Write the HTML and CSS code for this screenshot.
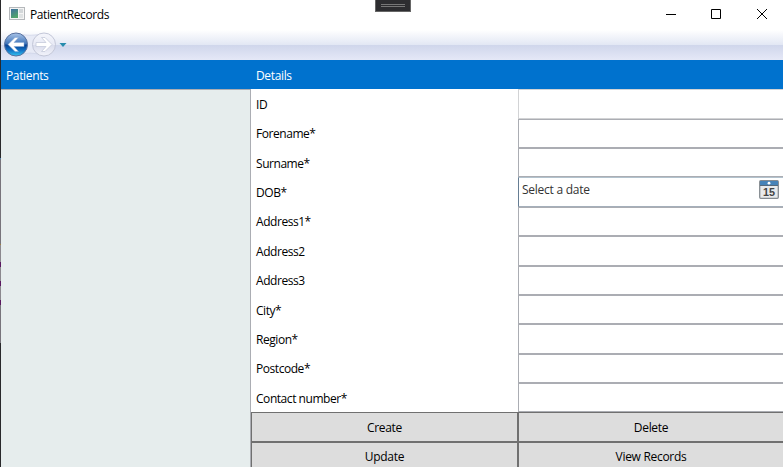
FILE: index.html
```
<!DOCTYPE html>
<html lang="en">
<head>
<meta charset="utf-8">
<title>PatientRecords</title>
<link rel="stylesheet" href="styles.css">
</head>
<body>
<div class="screen">
  <div class="backdrop"></div>
  <div class="window">
    <header class="titlebar">
      <svg class="app-icon" width="16" height="14" viewBox="0 0 16 14">
        <defs><linearGradient id="app" x1="0" y1="0" x2="0.4" y2="1"><stop offset="0" stop-color="#3f6fa0"/><stop offset="1" stop-color="#4fa36b"/></linearGradient></defs>
        <rect x=".5" y=".5" width="15" height="12" fill="#f4f4f4" stroke="#b5b8bb"/>
        <rect x="2" y="2" width="7" height="9" fill="url(#app)"/>
        <rect x="10" y="2" width="4" height="4" fill="#d3d7d9"/><rect x="10" y="7" width="4" height="4" fill="#dfe2e3"/>
      </svg>
      <span class="title">PatientRecords</span>
      <svg class="controls" width="103" height="12" viewBox="0 0 103 12" fill="none" stroke="#000">
        <path d="M0 6.500h10M45.500 1.500h9v9h-9zM91 1l10 10M101 1l-10 10"/>
      </svg>
    </header>
    <nav class="navbar">
      <svg width="70" height="30" viewBox="0 0 70 30">
        <defs>
          <linearGradient id="blue" x1="0" y1="0" x2="0" y2="1"><stop offset="0" stop-color="#a9c4e8"/><stop offset=".48" stop-color="#3d72b8"/><stop offset=".52" stop-color="#073f91"/><stop offset=".75" stop-color="#1272c5"/><stop offset="1" stop-color="#35c5f2"/></linearGradient>
          <linearGradient id="pale" x1="0" y1="0" x2="0" y2="1"><stop offset="0" stop-color="#f5f6fc"/><stop offset=".5" stop-color="#e8eaf5"/><stop offset=".52" stop-color="#d9dcec"/><stop offset="1" stop-color="#f3f4fb"/></linearGradient>
        </defs>
        <path d="M15 3.500Q29 7 43 3.500V26Q29 20 15 26z" fill="#e7eaf6" stroke="#cdd2e7" stroke-width=".7"/>
        <circle cx="15" cy="14.500" r="11.500" fill="url(#blue)" stroke="#58719f"/>
        <circle cx="43" cy="14.500" r="11.500" fill="url(#pale)" stroke="#c3c7d8"/>
        <path d="M7 14.500l7-7h3.500l-4.500 5h10v4H13l4.500 5H14z" fill="#fff" stroke="#8babd5" stroke-width=".5"/>
        <path d="M51 14.500l-7-7h-3.500l4.500 5H35v4h10l-4.500 5H44z" fill="#fff" stroke="#c5cadb" stroke-width=".8"/>
        <path d="M58.500 13h7L62 17z" fill="#278cad"/>
      </svg>
    </nav>
    <main class="content">
      <section class="patients"><h2>Patients</h2><div class="list"></div></section>
      <section class="details">
        <h2>Details</h2>
        <div class="form">
          <label>ID</label><div class="field disabled"></div>
          <label>Forename*</label><div class="field"></div>
          <label>Surname*</label><div class="field"></div>
          <label>DOB*</label>
          <div class="field date"><span>Select a date</span>
            <svg width="20" height="19" viewBox="0 0 20 19">
              <rect x=".7" y=".7" width="18.600" height="17.600" rx="1" fill="#e9eaeb" stroke="#858b91" stroke-width="1.300"/>
              <path d="M1 1h18v5H1z" fill="#4783b8"/><path d="M1 5.500h18" stroke="#56697b"/><circle cx="10" cy="3.200" r="1.400" fill="#fff"/>
              <text x="4" y="15.500" textLength="12" lengthAdjust="spacingAndGlyphs" class="day">15</text>
            </svg>
          </div>
          <label>Address1*</label><div class="field"></div>
          <label>Address2</label><div class="field"></div>
          <label>Address3</label><div class="field"></div>
          <label>City*</label><div class="field"></div>
          <label>Region*</label><div class="field"></div>
          <label>Postcode*</label><div class="field"></div>
          <label>Contact number*</label><div class="field"></div>
          <button>Create</button><button>Delete</button>
          <button>Update</button><button>View Records</button>
        </div>
      </section>
    </main>
  </div>
  <div class="debug-handle"></div>
</div>
</body>
</html>
```
FILE: styles.css
```
* { box-sizing: border-box; }
body { margin: 0; overflow: hidden; background: #fff; }
.screen { position: relative; display: flex; width: 783px; height: 467px; overflow: hidden; font: 12px/16px "Open Sans", "Noto Sans", sans-serif; letter-spacing: -.35px; color: #000; }
.backdrop { width: 1px; flex: none; background: linear-gradient(#29292b 0 158px, #4b83b0 158px 159px, #77747b 159px 244px, #a08040 244px 245px, #8b888e 245px 262px, #5a1760 262px 267px, #8b888e 267px 281px, #5a1760 281px 286px, #8b888e 286px 300px, #5a1760 300px 305px, #77747b 305px 343px, #29292b 343px); }
.window { flex: 1; min-width: 0; display: flex; flex-direction: column; background: #fff; }
.titlebar { height: 30px; flex: none; display: flex; align-items: center; padding: 0 14px 2px 8px; }
.app-icon { margin-right: 5px; }
.title { padding-top: 2px; letter-spacing: -.4px; }
.controls { margin-left: auto; }
.navbar { height: 30px; flex: none; background: linear-gradient(#fff 0, #e2e7f4 15px, #cfd6eb 15px, #e5e8f7 30px); }
.navbar svg { display: block; }
.content { flex: 1; display: grid; grid-template-columns: 250px minmax(0, 1fr); min-height: 0; overflow: hidden; }
.patients, .details { display: flex; flex-direction: column; min-height: 0; }
h2 { margin: 0; height: 29px; flex: none; padding: 8px 5px; font-size: 12px; font-weight: 400; color: #fff; background: #0072ce; }
.list { flex: 1; background: #e6eded; border: 1px solid #abadb3; border-width: 1px 1px 0 0; }
.form { display: grid; grid-template-columns: 267px 266px; grid-auto-rows: 29.360px; padding-top: .36px; }
label { padding: 7.660px 5px 0; letter-spacing: -.45px; }
.field { border: 1px solid #abadb3; border-right: 0; background: #fff; }
.disabled { border-color: #d2d3d5; }
.date { display: flex; justify-content: space-between; padding: 2px 5px 0 3px; color: #333; border-color: #b2c2cd #abadb3 #a5afba #667d93; letter-spacing: -.25px; }
.date span { padding-top: 2px; }
.date svg { display: block; }
.day { font: 700 10px "Liberation Sans", sans-serif; fill: #444; letter-spacing: 0; }
button { margin: 0; padding: 2px 0 0; border: 1px solid #707070; border-radius: 0; background: #ddd; color: #000; font: inherit; letter-spacing: -.3px; }
.debug-handle { position: absolute; left: 375px; top: 0; width: 36px; height: 12px; border: 1px solid #666; border-top: 0; background: linear-gradient(#777, #777) 5px 4px / 24px 1px no-repeat, linear-gradient(#777, #777) 5px 6px / 24px 1px no-repeat, #2d2d30; }
```
